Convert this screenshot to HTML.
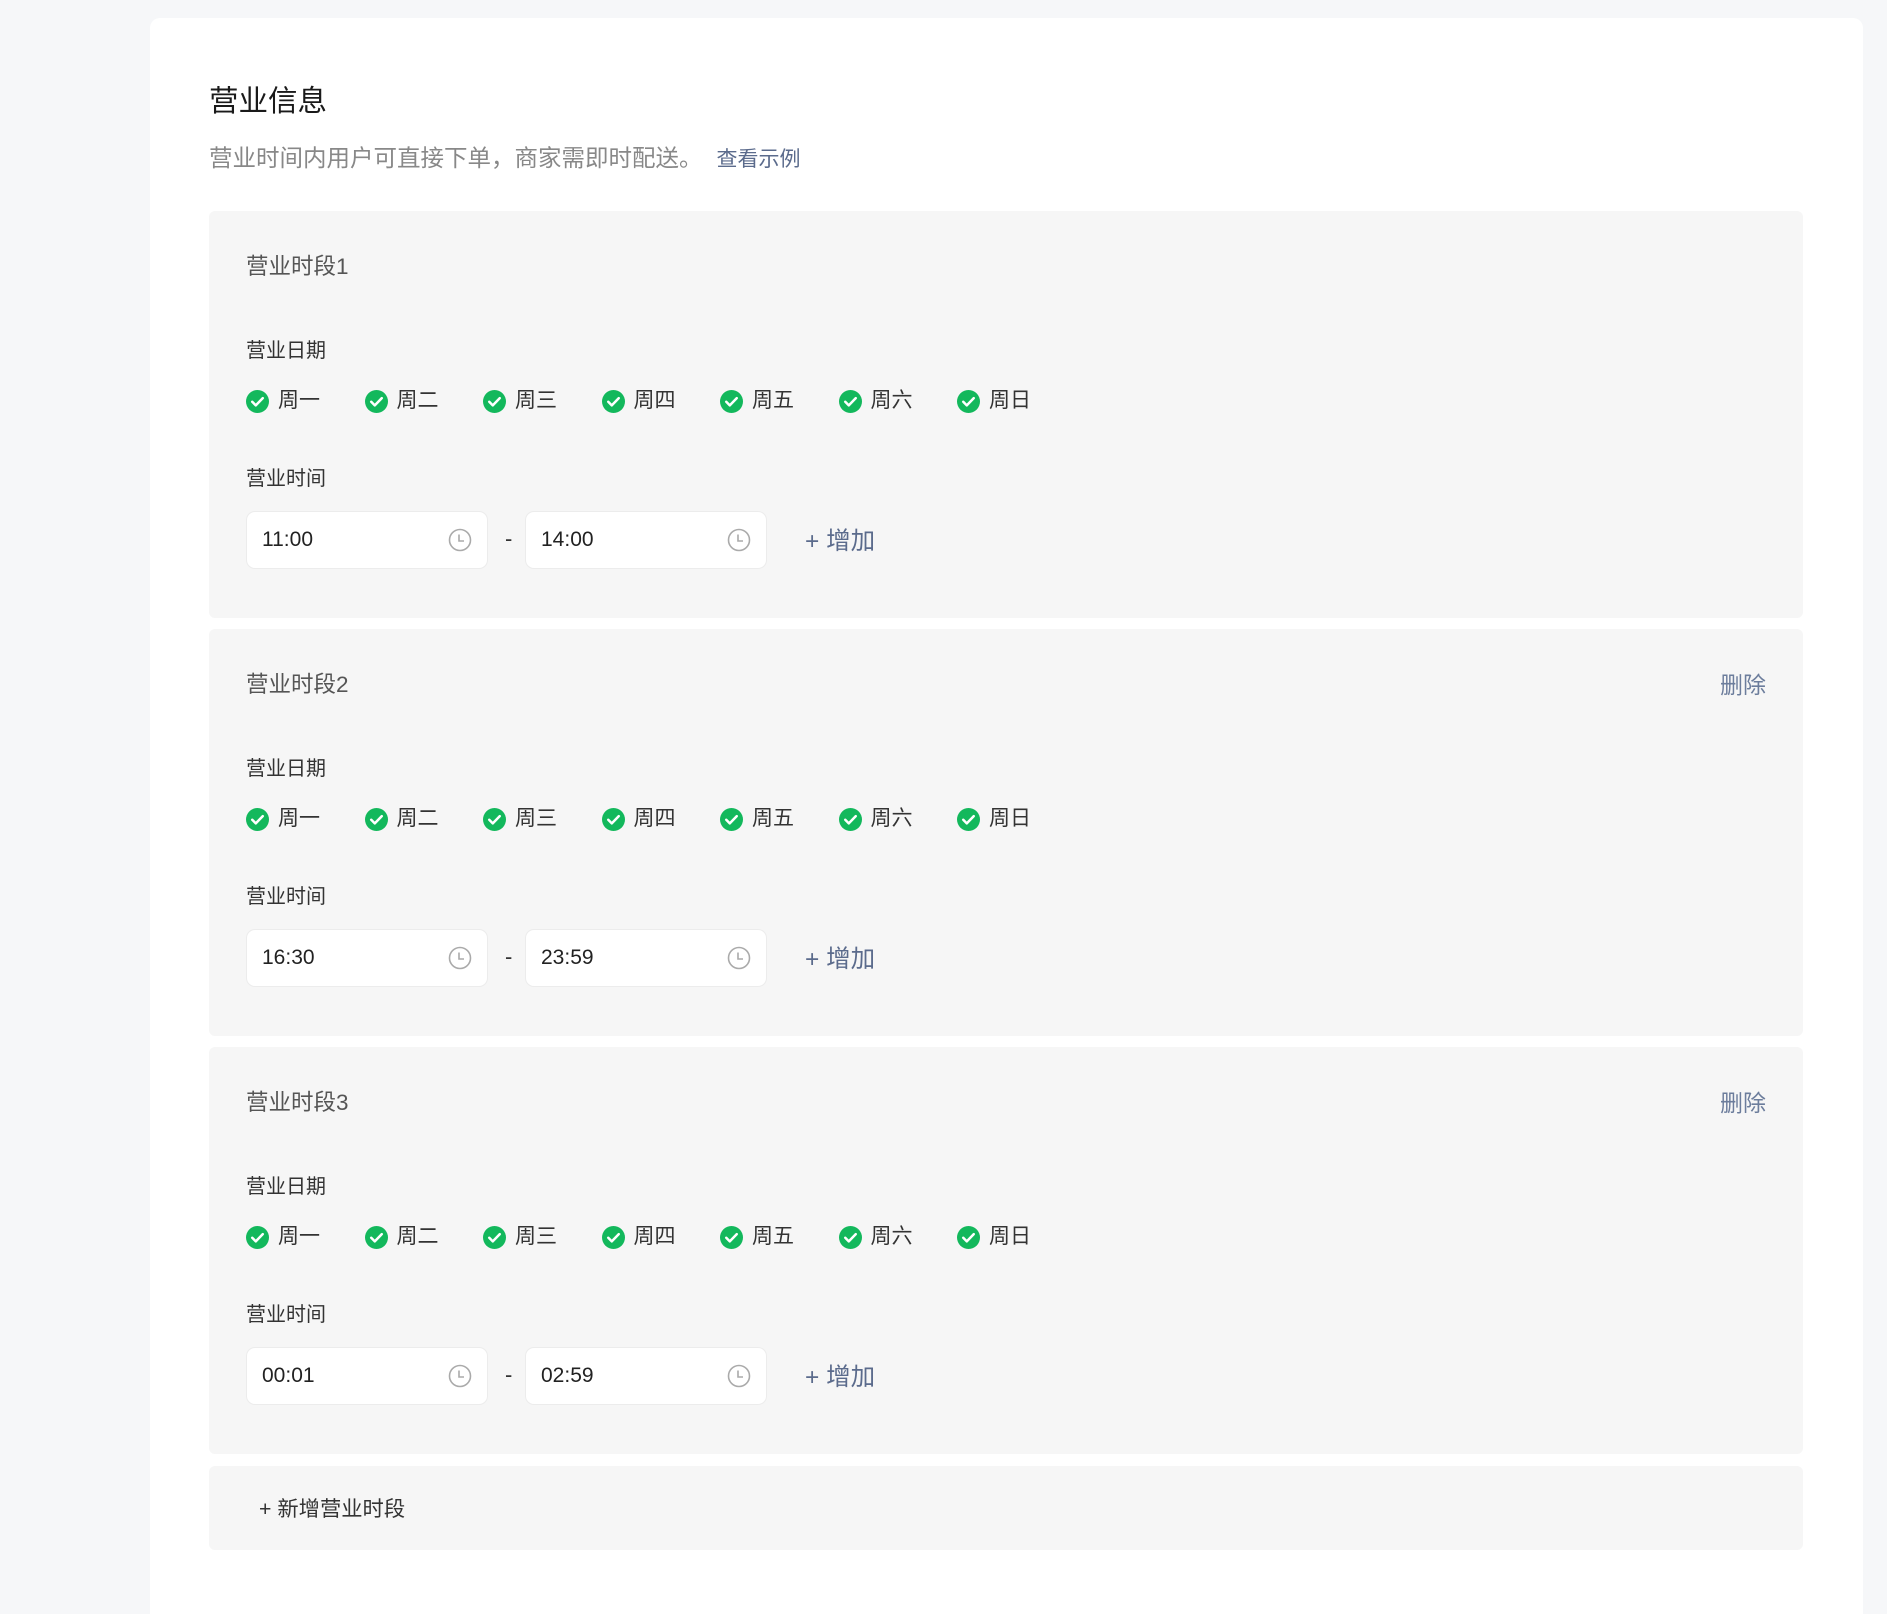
<!DOCTYPE html>
<html><head><meta charset="utf-8"><style>
*{margin:0;padding:0;box-sizing:border-box}
html,body{width:1887px;height:1614px;overflow:hidden}
body{background:#f6f7f9;font-family:"Liberation Sans","Noto Sans CJK SC",sans-serif;position:relative}
.card{position:absolute;left:150px;top:18px;width:1713px;height:1596px;background:#fff;border-radius:10px 10px 0 0}
.abs{position:absolute}
.title{left:209px;top:84px;font-size:29.5px;color:#1a1a1a;line-height:36px}
.sub{left:209px;top:143px;font-size:23.5px;color:#888;line-height:30px}
.sub a{color:#5b6b8c;font-size:21px;margin-left:14px;text-decoration:none}
.sec{position:absolute;left:209px;width:1594px;height:407px;background:#f6f6f6;border-radius:6px}
.st{left:37px;top:41px;font-size:22.5px;color:#555;line-height:30px}
.del{right:37px;top:41px;font-size:23px;color:#6c7d9c;line-height:30px}
.lab{left:37px;font-size:20px;color:#333;line-height:26px}
.days{left:37px;top:177px;display:flex}
.day{width:118.5px;display:flex;align-items:center;font-size:21px;color:#333;line-height:26px}
.day svg{margin-right:9px}
.inp{top:300px;width:242px;height:58px;background:#fff;border:1px solid #ececec;border-radius:9px}
.inp span{position:absolute;left:15px;top:15px;font-size:21px;color:#222;line-height:26px}
.inp svg{position:absolute;right:15px;top:16px}
.dash{left:296px;top:315px;font-size:22px;color:#333}
.add{left:596px;top:316px;font-size:24.5px;color:#5b6b8c;line-height:30px}
.new{position:absolute;left:209px;top:1466px;width:1594px;height:84px;background:#f6f6f6;border-radius:6px}
.new span{position:absolute;left:50px;top:30px;font-size:21.3px;color:#333;line-height:26px}
</style></head><body>
<div class="card"></div>
<div class="abs title">营业信息</div>
<div class="abs sub">营业时间内用户可直接下单，商家需即时配送。<a>查看示例</a></div>

<div class="sec" style="top:211px">
 <div class="abs st">营业时段1</div>
 <div class="abs lab" style="top:127px">营业日期</div>
 <div class="abs days">
  <div class="day"><svg width="23" height="23" viewBox="0 0 24 24"><circle cx="12" cy="12" r="12" fill="#13b85c"/><path d="M6.5 12.3l3.7 3.7 7.3-7.5" stroke="#fff" stroke-width="2.6" fill="none" stroke-linecap="round" stroke-linejoin="round"/></svg>周一</div>
  <div class="day"><svg width="23" height="23" viewBox="0 0 24 24"><circle cx="12" cy="12" r="12" fill="#13b85c"/><path d="M6.5 12.3l3.7 3.7 7.3-7.5" stroke="#fff" stroke-width="2.6" fill="none" stroke-linecap="round" stroke-linejoin="round"/></svg>周二</div>
  <div class="day"><svg width="23" height="23" viewBox="0 0 24 24"><circle cx="12" cy="12" r="12" fill="#13b85c"/><path d="M6.5 12.3l3.7 3.7 7.3-7.5" stroke="#fff" stroke-width="2.6" fill="none" stroke-linecap="round" stroke-linejoin="round"/></svg>周三</div>
  <div class="day"><svg width="23" height="23" viewBox="0 0 24 24"><circle cx="12" cy="12" r="12" fill="#13b85c"/><path d="M6.5 12.3l3.7 3.7 7.3-7.5" stroke="#fff" stroke-width="2.6" fill="none" stroke-linecap="round" stroke-linejoin="round"/></svg>周四</div>
  <div class="day"><svg width="23" height="23" viewBox="0 0 24 24"><circle cx="12" cy="12" r="12" fill="#13b85c"/><path d="M6.5 12.3l3.7 3.7 7.3-7.5" stroke="#fff" stroke-width="2.6" fill="none" stroke-linecap="round" stroke-linejoin="round"/></svg>周五</div>
  <div class="day"><svg width="23" height="23" viewBox="0 0 24 24"><circle cx="12" cy="12" r="12" fill="#13b85c"/><path d="M6.5 12.3l3.7 3.7 7.3-7.5" stroke="#fff" stroke-width="2.6" fill="none" stroke-linecap="round" stroke-linejoin="round"/></svg>周六</div>
  <div class="day"><svg width="23" height="23" viewBox="0 0 24 24"><circle cx="12" cy="12" r="12" fill="#13b85c"/><path d="M6.5 12.3l3.7 3.7 7.3-7.5" stroke="#fff" stroke-width="2.6" fill="none" stroke-linecap="round" stroke-linejoin="round"/></svg>周日</div>
 </div>
 <div class="abs lab" style="top:255px">营业时间</div>
 <div class="abs inp" style="left:37px"><span>11:00</span><svg width="24" height="24" viewBox="0 0 24 24"><circle cx="12" cy="12" r="10.5" stroke="#aaa" stroke-width="1.6" fill="none"/><path d="M11 6.5v6.5h5" stroke="#aaa" stroke-width="1.6" fill="none"/></svg></div>
 <div class="abs dash">-</div>
 <div class="abs inp" style="left:316px"><span>14:00</span><svg width="24" height="24" viewBox="0 0 24 24"><circle cx="12" cy="12" r="10.5" stroke="#aaa" stroke-width="1.6" fill="none"/><path d="M11 6.5v6.5h5" stroke="#aaa" stroke-width="1.6" fill="none"/></svg></div>
 <div class="abs add">+ 增加</div>
</div>

<div class="sec" style="top:629px">
 <div class="abs st">营业时段2</div><div class="abs del">删除</div>
 <div class="abs lab" style="top:127px">营业日期</div>
 <div class="abs days">
  <div class="day"><svg width="23" height="23" viewBox="0 0 24 24"><circle cx="12" cy="12" r="12" fill="#13b85c"/><path d="M6.5 12.3l3.7 3.7 7.3-7.5" stroke="#fff" stroke-width="2.6" fill="none" stroke-linecap="round" stroke-linejoin="round"/></svg>周一</div>
  <div class="day"><svg width="23" height="23" viewBox="0 0 24 24"><circle cx="12" cy="12" r="12" fill="#13b85c"/><path d="M6.5 12.3l3.7 3.7 7.3-7.5" stroke="#fff" stroke-width="2.6" fill="none" stroke-linecap="round" stroke-linejoin="round"/></svg>周二</div>
  <div class="day"><svg width="23" height="23" viewBox="0 0 24 24"><circle cx="12" cy="12" r="12" fill="#13b85c"/><path d="M6.5 12.3l3.7 3.7 7.3-7.5" stroke="#fff" stroke-width="2.6" fill="none" stroke-linecap="round" stroke-linejoin="round"/></svg>周三</div>
  <div class="day"><svg width="23" height="23" viewBox="0 0 24 24"><circle cx="12" cy="12" r="12" fill="#13b85c"/><path d="M6.5 12.3l3.7 3.7 7.3-7.5" stroke="#fff" stroke-width="2.6" fill="none" stroke-linecap="round" stroke-linejoin="round"/></svg>周四</div>
  <div class="day"><svg width="23" height="23" viewBox="0 0 24 24"><circle cx="12" cy="12" r="12" fill="#13b85c"/><path d="M6.5 12.3l3.7 3.7 7.3-7.5" stroke="#fff" stroke-width="2.6" fill="none" stroke-linecap="round" stroke-linejoin="round"/></svg>周五</div>
  <div class="day"><svg width="23" height="23" viewBox="0 0 24 24"><circle cx="12" cy="12" r="12" fill="#13b85c"/><path d="M6.5 12.3l3.7 3.7 7.3-7.5" stroke="#fff" stroke-width="2.6" fill="none" stroke-linecap="round" stroke-linejoin="round"/></svg>周六</div>
  <div class="day"><svg width="23" height="23" viewBox="0 0 24 24"><circle cx="12" cy="12" r="12" fill="#13b85c"/><path d="M6.5 12.3l3.7 3.7 7.3-7.5" stroke="#fff" stroke-width="2.6" fill="none" stroke-linecap="round" stroke-linejoin="round"/></svg>周日</div>
 </div>
 <div class="abs lab" style="top:255px">营业时间</div>
 <div class="abs inp" style="left:37px"><span>16:30</span><svg width="24" height="24" viewBox="0 0 24 24"><circle cx="12" cy="12" r="10.5" stroke="#aaa" stroke-width="1.6" fill="none"/><path d="M11 6.5v6.5h5" stroke="#aaa" stroke-width="1.6" fill="none"/></svg></div>
 <div class="abs dash">-</div>
 <div class="abs inp" style="left:316px"><span>23:59</span><svg width="24" height="24" viewBox="0 0 24 24"><circle cx="12" cy="12" r="10.5" stroke="#aaa" stroke-width="1.6" fill="none"/><path d="M11 6.5v6.5h5" stroke="#aaa" stroke-width="1.6" fill="none"/></svg></div>
 <div class="abs add">+ 增加</div>
</div>

<div class="sec" style="top:1047px">
 <div class="abs st">营业时段3</div><div class="abs del">删除</div>
 <div class="abs lab" style="top:127px">营业日期</div>
 <div class="abs days">
  <div class="day"><svg width="23" height="23" viewBox="0 0 24 24"><circle cx="12" cy="12" r="12" fill="#13b85c"/><path d="M6.5 12.3l3.7 3.7 7.3-7.5" stroke="#fff" stroke-width="2.6" fill="none" stroke-linecap="round" stroke-linejoin="round"/></svg>周一</div>
  <div class="day"><svg width="23" height="23" viewBox="0 0 24 24"><circle cx="12" cy="12" r="12" fill="#13b85c"/><path d="M6.5 12.3l3.7 3.7 7.3-7.5" stroke="#fff" stroke-width="2.6" fill="none" stroke-linecap="round" stroke-linejoin="round"/></svg>周二</div>
  <div class="day"><svg width="23" height="23" viewBox="0 0 24 24"><circle cx="12" cy="12" r="12" fill="#13b85c"/><path d="M6.5 12.3l3.7 3.7 7.3-7.5" stroke="#fff" stroke-width="2.6" fill="none" stroke-linecap="round" stroke-linejoin="round"/></svg>周三</div>
  <div class="day"><svg width="23" height="23" viewBox="0 0 24 24"><circle cx="12" cy="12" r="12" fill="#13b85c"/><path d="M6.5 12.3l3.7 3.7 7.3-7.5" stroke="#fff" stroke-width="2.6" fill="none" stroke-linecap="round" stroke-linejoin="round"/></svg>周四</div>
  <div class="day"><svg width="23" height="23" viewBox="0 0 24 24"><circle cx="12" cy="12" r="12" fill="#13b85c"/><path d="M6.5 12.3l3.7 3.7 7.3-7.5" stroke="#fff" stroke-width="2.6" fill="none" stroke-linecap="round" stroke-linejoin="round"/></svg>周五</div>
  <div class="day"><svg width="23" height="23" viewBox="0 0 24 24"><circle cx="12" cy="12" r="12" fill="#13b85c"/><path d="M6.5 12.3l3.7 3.7 7.3-7.5" stroke="#fff" stroke-width="2.6" fill="none" stroke-linecap="round" stroke-linejoin="round"/></svg>周六</div>
  <div class="day"><svg width="23" height="23" viewBox="0 0 24 24"><circle cx="12" cy="12" r="12" fill="#13b85c"/><path d="M6.5 12.3l3.7 3.7 7.3-7.5" stroke="#fff" stroke-width="2.6" fill="none" stroke-linecap="round" stroke-linejoin="round"/></svg>周日</div>
 </div>
 <div class="abs lab" style="top:255px">营业时间</div>
 <div class="abs inp" style="left:37px"><span>00:01</span><svg width="24" height="24" viewBox="0 0 24 24"><circle cx="12" cy="12" r="10.5" stroke="#aaa" stroke-width="1.6" fill="none"/><path d="M11 6.5v6.5h5" stroke="#aaa" stroke-width="1.6" fill="none"/></svg></div>
 <div class="abs dash">-</div>
 <div class="abs inp" style="left:316px"><span>02:59</span><svg width="24" height="24" viewBox="0 0 24 24"><circle cx="12" cy="12" r="10.5" stroke="#aaa" stroke-width="1.6" fill="none"/><path d="M11 6.5v6.5h5" stroke="#aaa" stroke-width="1.6" fill="none"/></svg></div>
 <div class="abs add">+ 增加</div>
</div>

<div class="new"><span>+ 新增营业时段</span></div>
</body></html>
